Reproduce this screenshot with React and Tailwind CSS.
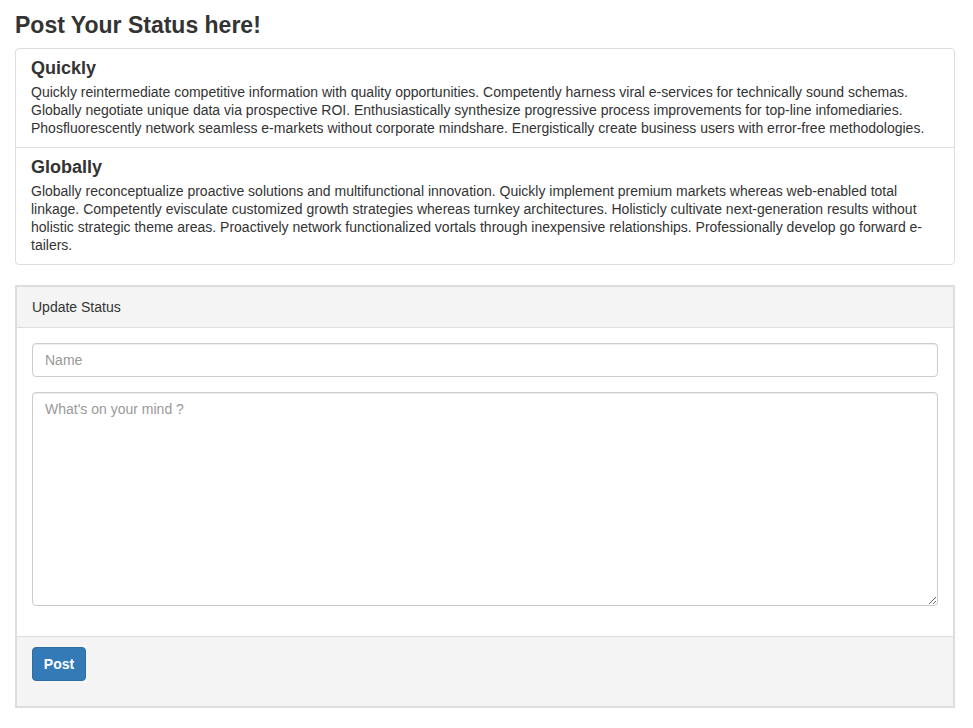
import React, { useState } from 'react';

const items = [
  {
    title: 'Quickly',
    lines: [
      'Quickly reintermediate competitive information with quality opportunities. Competently harness viral e-services for technically sound schemas.',
      'Globally negotiate unique data via prospective ROI. Enthusiastically synthesize progressive process improvements for top-line infomediaries.',
      'Phosfluorescently network seamless e-markets without corporate mindshare. Energistically create business users with error-free methodologies.',
    ],
  },
  {
    title: 'Globally',
    lines: [
      'Globally reconceptualize proactive solutions and multifunctional innovation. Quickly implement premium markets whereas web-enabled total',
      'linkage. Competently evisculate customized growth strategies whereas turnkey architectures. Holisticly cultivate next-generation results without',
      'holistic strategic theme areas. Proactively network functionalized vortals through inexpensive relationships. Professionally develop go forward e-',
      'tailers.',
    ],
  },
];

const App = () => {
  const [name, setName] = useState('');
  const [status, setStatus] = useState('');

  return (
    <div className="min-h-[728px] bg-white px-[15px] text-[14px] text-[#333] font-['Liberation_Sans',Arial,sans-serif]">
      <div className="w-[940px]">
        <h3 className="pt-[12px] mb-[10px] text-[23px] leading-[26px] font-bold">Post Your Status here!</h3>

        {/* list group */}
        <div className="mb-[20px] rounded-[4px] border border-[#ddd]">
          {items.map((item, i) => (
            <div
              key={item.title}
              className={`px-[15px] py-[10px] ${i > 0 ? 'border-t border-[#ddd]' : ''}`}
            >
              <h4 className="mb-[5px] text-[18px] leading-[19px] font-bold">{item.title}</h4>
              <p className="text-[14px] leading-[18px] whitespace-nowrap">
                {item.lines.map((line, j) => (
                  <span key={j} className="block">{line}</span>
                ))}
              </p>
            </div>
          ))}
        </div>

        {/* panel */}
        <div className="border-2 border-[#ddd] bg-white">
          <div className="bg-[#f4f4f4] border-b border-[#ddd] px-[15px] pt-[10px] pb-[10px] leading-[20px]">
            Update Status
          </div>
          <div className="p-[15px]">
            <input
              className="mb-[15px] block h-[34px] w-full rounded-[4px] border border-[#ccc] px-[12px] py-[6px] text-[14px] text-[#555] placeholder-[#999] outline-none shadow-[inset_0_1px_1px_rgba(0,0,0,0.075)]"
              placeholder="Name"
              value={name}
              onChange={(e) => setName(e.target.value)}
            />
            <textarea
              className="mb-[15px] block h-[214px] w-full rounded-[4px] border border-[#ccc] px-[12px] py-[6px] text-[14px] leading-[20px] text-[#555] placeholder-[#999] outline-none shadow-[inset_0_1px_1px_rgba(0,0,0,0.075)]"
              placeholder="What's on your mind ?"
              value={status}
              onChange={(e) => setStatus(e.target.value)}
            />
          </div>
          <div className="bg-[#f4f4f4] border-t border-[#ddd] px-[15px] pt-[10px] pb-[25px]">
            <button className="h-[34px] w-[54px] rounded-[4px] border border-[#2e6da4] bg-[#337ab7] text-[14px] font-bold text-white">
              Post
            </button>
          </div>
        </div>
      </div>
    </div>
  );
};

export default App;
